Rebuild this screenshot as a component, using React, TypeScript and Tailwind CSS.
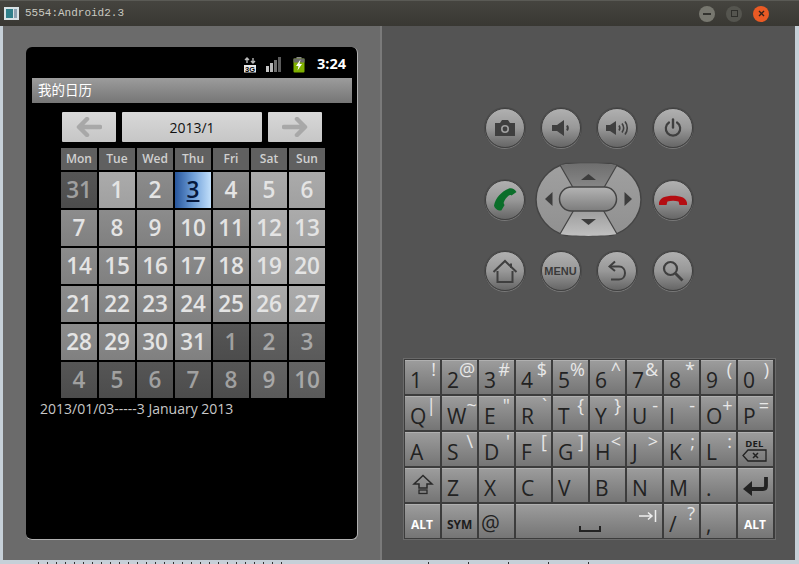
import React from 'react'

const PHONE_FONT = { fontFamily: '"Open Sans", "Noto Sans CJK SC", sans-serif' }

const LIGHT = 'bg-gradient-to-b from-[#ababab] to-[#a0a0a0]'
const MID = 'bg-gradient-to-b from-[#8c8c8c] to-[#808080]'
const FADED = 'bg-gradient-to-b from-[#565656] to-[#4c4c4c]'
const FADED_2 = 'bg-gradient-to-b from-[#646464] to-[#5a5a5a]'

const weekDays = ['Mon', 'Tue', 'Wed', 'Thu', 'Fri', 'Sat', 'Sun']

const days = [
  { n: 31, bg: FADED, text: 'text-[#a0a0a0]' },
  { n: 1, bg: LIGHT },
  { n: 2, bg: MID },
  { n: 3, today: true },
  { n: 4, bg: MID },
  { n: 5, bg: LIGHT },
  { n: 6, bg: LIGHT },
  { n: 7, bg: MID },
  { n: 8, bg: MID },
  { n: 9, bg: MID },
  { n: 10, bg: MID },
  { n: 11, bg: MID },
  { n: 12, bg: LIGHT },
  { n: 13, bg: LIGHT },
  { n: 14, bg: MID },
  { n: 15, bg: MID },
  { n: 16, bg: MID },
  { n: 17, bg: MID },
  { n: 18, bg: MID },
  { n: 19, bg: LIGHT },
  { n: 20, bg: LIGHT },
  { n: 21, bg: MID },
  { n: 22, bg: MID },
  { n: 23, bg: MID },
  { n: 24, bg: MID },
  { n: 25, bg: MID },
  { n: 26, bg: LIGHT },
  { n: 27, bg: LIGHT },
  { n: 28, bg: MID },
  { n: 29, bg: MID },
  { n: 30, bg: MID },
  { n: 31, bg: MID },
  { n: 1, bg: FADED, text: 'text-[#a0a0a0]' },
  { n: 2, bg: FADED_2, text: 'text-[#a8a8a8]' },
  { n: 3, bg: FADED_2, text: 'text-[#a8a8a8]' },
  { n: 4, bg: FADED, text: 'text-[#a0a0a0]' },
  { n: 5, bg: FADED, text: 'text-[#a0a0a0]' },
  { n: 6, bg: FADED, text: 'text-[#a0a0a0]' },
  { n: 7, bg: FADED, text: 'text-[#a0a0a0]' },
  { n: 8, bg: FADED, text: 'text-[#a0a0a0]' },
  { n: 9, bg: FADED_2, text: 'text-[#a8a8a8]' },
  { n: 10, bg: FADED_2, text: 'text-[#a8a8a8]' },
]

const NavArrow = ({ flip }: { flip?: boolean }) => (
  <svg width="26" height="20" viewBox="0 0 26 20" className={flip ? 'scale-x-[-1]' : ''}>
    <path d="M11 2 L3 10 L11 18 M4 10 H24" fill="none" stroke="#a8a8a8" strokeWidth="4.5" strokeLinecap="round" strokeLinejoin="round" />
  </svg>
)

const StatusBar = () => (
  <div className="h-[31px] pt-1 flex items-center justify-end pr-[6px]">
    <svg width="14" height="16" viewBox="0 0 14 16">
      <path d="M4 6V1M2 3l2-2 2 2M10 1v5M8 4l2 2 2-2" fill="none" stroke="#b8b8b8" strokeWidth="1.4" />
      <rect x="1" y="8" width="12" height="7.5" fill="#e8e8e8" />
      <text x="7" y="15" textAnchor="middle" fontSize="7.5" fontWeight="700" fill="#000" fontFamily="Liberation Sans">3G</text>
    </svg>
    <svg width="16" height="15" viewBox="0 0 16 15" className="ml-[9px]">
      <rect x="0" y="9" width="3" height="6" fill="#c4c4c4" />
      <rect x="4" y="6" width="3" height="9" fill="#b8b8b8" />
      <rect x="8" y="3" width="3" height="12" fill="#707070" />
      <rect x="12" y="0" width="3" height="15" fill="#5c5c5c" />
    </svg>
    <svg width="12" height="16" viewBox="0 0 12 16" className="ml-[11px]">
      <rect x="3.5" y="0" width="5" height="2" fill="#8a8a8a" />
      <rect x="0.5" y="1.5" width="11" height="14" rx="1" fill="#7fb000" />
      <rect x="0.5" y="1.5" width="11" height="4" fill="#6a6a6a" />
      <path d="M7.5 2.5 L3 9 H5.5 L4.5 13.5 L9 7 H6.5 Z" fill="#fff" />
    </svg>
    <span className="ml-[12px] text-white text-[14.5px] font-bold leading-none" style={{ fontFamily: '"Open Sans", sans-serif' }}>
      3:24
    </span>
  </div>
)

const Calendar = () => (
  <div className="w-[264px] ml-[29px]">
    <div className="flex gap-1.5 pl-px">
      <button className="w-[54px] h-[30px] flex items-center justify-center rounded-[1px] bg-gradient-to-b from-[#d8d8d8] to-[#c6c6c6]">
        <NavArrow />
      </button>
      <div className="w-[140px] h-[30px] flex items-center justify-center rounded-[1px] bg-gradient-to-b from-[#d8d8d8] to-[#c6c6c6] text-[14px] text-[#111]">
        2013/1
      </div>
      <button className="w-[54px] h-[30px] flex items-center justify-center rounded-[1px] bg-gradient-to-b from-[#d8d8d8] to-[#c6c6c6]">
        <NavArrow flip />
      </button>
    </div>
    <div className="mt-1.5 grid grid-cols-[repeat(7,36px)] gap-0.5 text-[#d0d0d0]">
      {weekDays.map((d) => (
        <div key={d} className="h-[22px] flex items-center justify-center bg-[#606060] text-[12px] font-semibold">
          {d}
        </div>
      ))}
      {days.map((d, i) =>
        d.today ? (
          <div
            key={i}
            className="h-9 flex items-center justify-center bg-gradient-to-r from-[#28569c] via-[#6f9fd8] to-[#c2dffa] text-[22.5px] font-semibold text-[#06183c] underline underline-offset-2"
          >
            {d.n}
          </div>
        ) : (
          <div
            key={i}
            className={`h-9 flex items-center justify-center text-[22.5px] font-semibold ${d.bg} ${d.text ?? 'text-[#e4e4e4]'}`}
          >
            {d.n}
          </div>
        ),
      )}
    </div>
  </div>
)

const Phone = () => (
  <div
    className="w-[332px] h-[493px] rounded-md bg-black border-b border-r border-[#b0b0b0] pl-1.5 pr-[5px] overflow-hidden"
    style={PHONE_FONT}
  >
    <StatusBar />
    <div className="h-[25px] flex items-center pl-1.5 bg-gradient-to-b from-[#9c9c9c] to-[#767676] text-[13.5px] text-white">
      我的日历
    </div>
    <div className="mt-[9px]">
      <Calendar />
    </div>
    <p className="mt-px pl-2 text-[14px] leading-5 text-[#c8c8c8]">2013/01/03-----3 January 2013</p>
  </div>
)

const RoundButton = ({ children }: { children: React.ReactNode }) => (
  <div className="w-10 h-10 rounded-full flex items-center justify-center bg-gradient-to-b from-[#b0b0b0] via-[#989898] to-[#666666] border border-[#404040] shadow-[0_1px_0_#787878,0_0_0_1px_#4a4a4a]">
    {children}
  </div>
)

const ICON = '#3f3f3f'

const Camera = () => (
  <svg width="22" height="18" viewBox="0 0 22 18">
    <path d="M1 4h5l2-3h6l2 3h5v13H1z" fill={ICON} />
    <circle cx="11" cy="10" r="4" fill="#a0a0a0" />
    <circle cx="11" cy="10" r="2.4" fill={ICON} />
  </svg>
)

const VolDown = () => (
  <svg width="20" height="18" viewBox="0 0 20 18">
    <path d="M1 6h5l7-5v16l-7-5H1z" fill={ICON} />
    <path d="M16 6.500c1 1.500 1 3.500 0 5" fill="none" stroke={ICON} strokeWidth="2" />
  </svg>
)

const VolUp = () => (
  <svg width="24" height="18" viewBox="0 0 24 18">
    <path d="M1 6h4l6-4v14l-6-4H1z" fill={ICON} />
    <path d="M14 6.500c1 1.500 1 3.500 0 5M17 4.500c2 2.700 2 6.300 0 9M20 2.500c3 3.800 3 9.200 0 13" fill="none" stroke={ICON} strokeWidth="1.6" />
  </svg>
)

const Power = () => (
  <svg width="18" height="20" viewBox="0 0 18 20">
    <path d="M5 4.500a7.200 7.200 0 1 0 8 0" fill="none" stroke={ICON} strokeWidth="2.200" strokeLinecap="round" />
    <path d="M9 1.500v8" stroke={ICON} strokeWidth="2.400" strokeLinecap="round" />
  </svg>
)

const Call = () => (
  <svg width="26" height="26" viewBox="0 0 26 26">
    <path d="M17 1.500c2.500-1 6 .5 7.500 3.500l-5 3.500c-1-.7-2-.6-3 .2-2.200 2-3.800 4-4.700 6.600-.3 1.100 0 2.100.8 2.700l-3.300 5.500C6 24 2.500 21.500 2 18.500 3.500 11 9.500 4.500 17 1.500z" fill="#0b6e2a" />
  </svg>
)

const HangUp = () => (
  <svg width="30" height="16" viewBox="0 0 30 16">
    <path d="M1 13c-.5-3 1-6 4-7.500C11 3 19 3 25 5.500c3 1.500 4.500 4.500 4 7.500l-7.500 0c-.5-1.500-.5-2.500-1-3.500-3.500-1-7.500-1-11 0-.5 1-.5 2-1 3.500z" fill="#b40d12" />
  </svg>
)

const Home = () => (
  <svg width="26" height="25" viewBox="0 0 26 25">
    <path d="M1.500 13 13 2l11.500 11" fill="none" stroke={ICON} strokeWidth="2" />
    <path d="M19 4.500V9" stroke={ICON} strokeWidth="2" />
    <path d="M5.500 12v11h15V12" fill="none" stroke={ICON} strokeWidth="2" />
  </svg>
)

const Back = () => (
  <svg width="22" height="22" viewBox="0 0 22 22">
    <path d="M9 1.500 3.500 6.500 9 11" fill="none" stroke={ICON} strokeWidth="2" />
    <path d="M4 6.500h9c8 0 8 13 0 13H5" fill="none" stroke={ICON} strokeWidth="2" />
  </svg>
)

const Search = () => (
  <svg width="22" height="22" viewBox="0 0 22 22">
    <circle cx="8.500" cy="8.500" r="6.500" fill="none" stroke={ICON} strokeWidth="2.200" />
    <path d="M13.500 13.500 20.500 20.500" stroke={ICON} strokeWidth="2.800" />
  </svg>
)

const DPad = () => (
  <svg width="107" height="75" viewBox="0 0 107 75">
    <defs>
      <linearGradient id="side" x1="0" y1="0" x2="0" y2="1">
        <stop offset="0" stopColor="#a0a0a0" />
        <stop offset="1" stopColor="#909090" />
      </linearGradient>
      <linearGradient id="up" x1="0" y1="0" x2="0" y2="1">
        <stop offset="0" stopColor="#6e6e6e" />
        <stop offset="1" stopColor="#8c8c8c" />
      </linearGradient>
      <linearGradient id="down" x1="0" y1="0" x2="0" y2="1">
        <stop offset="0" stopColor="#9a9a9a" />
        <stop offset="1" stopColor="#c0c0c0" />
      </linearGradient>
      <linearGradient id="pill" x1="0" y1="0" x2="0" y2="1">
        <stop offset="0" stopColor="#b4b4b4" />
        <stop offset="1" stopColor="#7c7c7c" />
      </linearGradient>
    </defs>
    <path d="M31 1.500h45c17 4 30 19 30 36s-13 32-30 36H31c-17-4-30-19-30-36s13-32 30-36z" fill="url(#side)" stroke="#444" strokeWidth="1.500" />
    <path d="M25 3 L41 30 H66 L82 3 C70 0.500 37 0.500 25 3z" fill="url(#up)" />
    <path d="M25 72 L41 46 H66 L82 72 C70 74.500 37 74.500 25 72z" fill="url(#down)" />
    <path d="M25 3 L40 29M82 3 L67 29M25 72 L40 46M82 72 L67 46" stroke="#444" strokeWidth="1.200" />
    <rect x="24.500" y="25" width="57" height="24" rx="12" fill="url(#pill)" stroke="#444" strokeWidth="1.500" />
    <path d="M53.500 12l7.500 6h-15z" fill="#3d3d3d" />
    <path d="M53.500 63l-7.500-6h15z" fill="#3d3d3d" />
    <path d="M10 37l7.500-7v14z" fill="#3d3d3d" />
    <path d="M97 37l-7.500-7v14z" fill="#3d3d3d" />
  </svg>
)

type KeyDef = {
  main?: React.ReactNode
  alt?: string
  span?: string
  mainClass?: string
}

const keys: KeyDef[] = [
  { main: '1', alt: '!' },
  { main: '2', alt: '@' },
  { main: '3', alt: '#' },
  { main: '4', alt: '$' },
  { main: '5', alt: '%' },
  { main: '6', alt: '^' },
  { main: '7', alt: '&' },
  { main: '8', alt: '*' },
  { main: '9', alt: '(' },
  { main: '0', alt: ')' },
  { main: 'Q', alt: '|' },
  { main: 'W', alt: '~' },
  { main: 'E', alt: '"' },
  { main: 'R', alt: '`' },
  { main: 'T', alt: '{' },
  { main: 'Y', alt: '}' },
  { main: 'U', alt: '-' },
  { main: 'I', alt: '-' },
  { main: 'O', alt: '+' },
  { main: 'P', alt: '=' },
  { main: 'A' },
  { main: 'S', alt: '\\' },
  { main: 'D', alt: "'" },
  { main: 'F', alt: '[' },
  { main: 'G', alt: ']' },
  { main: 'H', alt: '<' },
  { main: 'J', alt: '>' },
  { main: 'K', alt: ';' },
  { main: 'L', alt: ':' },
  {
    main: (
      <span className="flex flex-col items-center leading-none">
        <span className="text-[9.5px] font-bold text-[#1c1c1c] tracking-wide">DEL</span>
        <svg width="25" height="13" viewBox="0 0 25 13" className="mt-px">
          <path d="M6 1h18v11H6L1 6.500z" fill="none" stroke="#222" strokeWidth="1.300" />
          <path d="M11 4l5 5M16 4l-5 5" stroke="#222" strokeWidth="1.500" />
        </svg>
      </span>
    ),
    mainClass: 'pl-1 pb-1',
  },
  {
    main: (
      <svg width="22" height="21" viewBox="0 0 22 21">
        <path d="M11 1.500 2 10h5v4h8v-4h5z" fill="none" stroke="#2a2a2a" strokeWidth="1.500" />
        <rect x="7" y="16" width="8" height="3.500" fill="none" stroke="#2a2a2a" strokeWidth="1.300" />
      </svg>
    ),
    mainClass: 'pl-[7px] pb-[7px]',
  },
  { main: 'Z' },
  { main: 'X' },
  { main: 'C' },
  { main: 'V' },
  { main: 'B' },
  { main: 'N' },
  { main: 'M' },
  { main: '.' },
  {
    main: (
      <svg width="26" height="20" viewBox="0 0 26 20">
        <path d="M24 1v9c0 2-1 3-3 3H8" fill="none" stroke="#222" strokeWidth="3.800" />
        <path d="M10 5 1 13l9 7z" fill="#222" />
      </svg>
    ),
    mainClass: 'pl-1 pb-[6px]',
  },
  { main: <span className="text-[12px] font-bold text-white">ALT</span>, mainClass: 'pl-1.5 pb-1.5' },
  { main: <span className="text-[12px] font-bold text-[#1c1c1c]">SYM</span>, mainClass: 'pl-[5px] pb-1.5' },
  { main: '@', mainClass: 'pl-0.5 pb-1' },
  {
    span: 'col-span-4',
    main: (
      <div className="relative w-full h-full">
        <svg width="22" height="8" viewBox="0 0 22 8" className="absolute bottom-[5px] left-[63px]">
          <path d="M1 1v5h20V1" fill="none" stroke="#222" strokeWidth="2" />
        </svg>
        <svg width="18" height="12" viewBox="0 0 18 12" className="absolute top-[6px] right-[5px]">
          <path d="M0 6h12M9 2.500l4 3.500-4 3.500M16.500 0v12" fill="none" stroke="#eee" strokeWidth="1.500" />
        </svg>
      </div>
    ),
    mainClass: 'w-full h-full pl-0 pb-0',
  },
  { main: '/', alt: '?' },
  { main: ',' },
  { main: <span className="text-[12px] font-bold text-white">ALT</span>, mainClass: 'pl-1.5 pb-1.5' },
]

const Key = ({ k }: { k: KeyDef }) => (
  <div
    className={`h-[34px] flex justify-between bg-gradient-to-b from-[#9d9d9d] to-[#757575] shadow-[inset_0_1px_0_#b0b0b0] ${k.span ?? ''}`}
  >
    <span className={`self-end leading-none text-[21px] text-[#222] ${k.mainClass ?? 'pl-[5px] pb-[3px]'}`}>{k.main}</span>
    {k.alt && <span className="self-start leading-none text-[18px] text-[#e8e8e8] pr-1">{k.alt}</span>}
  </div>
)

const Keyboard = () => (
  <div
    className="w-[373px] grid grid-cols-[repeat(10,35px)] gap-0.5 p-px bg-[#3c3c3c] border border-[#6a6a6a]"
    style={{ fontFamily: '"Open Sans", sans-serif' }}
  >
    {keys.map((k, i) => (
      <Key key={i} k={k} />
    ))}
  </div>
)

const Controls = () => (
  <div className="flex-1 flex flex-col items-center bg-[#545454]">
    <div className="mt-[82px] w-[208px] flex flex-col">
      <div className="flex justify-between">
        <RoundButton><Camera /></RoundButton>
        <RoundButton><VolDown /></RoundButton>
        <RoundButton><VolUp /></RoundButton>
        <RoundButton><Power /></RoundButton>
      </div>
      <div className="mt-[14px] flex items-center justify-between">
        <RoundButton><Call /></RoundButton>
        <DPad />
        <RoundButton><HangUp /></RoundButton>
      </div>
      <div className="mt-[14px] flex justify-between">
        <RoundButton><Home /></RoundButton>
        <RoundButton>
          <span className="text-[11px] font-bold text-[#3a3a3a]" style={{ fontFamily: '"Liberation Sans", sans-serif' }}>
            MENU
          </span>
        </RoundButton>
        <RoundButton><Back /></RoundButton>
        <RoundButton><Search /></RoundButton>
      </div>
    </div>
    <div className="mt-[67px] ml-0.5">
      <Keyboard />
    </div>
  </div>
)

const TitleBar = () => (
  <div className="h-[26px] flex items-center justify-between bg-gradient-to-b from-[#45443f] to-[#393833] pl-[4px] pr-[30px] border-t border-[#5a5a55]">
    <div className="flex items-center gap-[6px]">
      <svg width="15" height="13" viewBox="0 0 15 13">
        <rect width="15" height="13" fill="#d8e2e6" />
        <rect x="2" y="2" width="7" height="9" fill="#2f7f8a" />
        <rect x="10" y="2" width="3" height="9" fill="#8aa0b0" />
      </svg>
      <span className="text-[11px] text-[#c9c9c0]" style={{ fontFamily: '"Liberation Mono", monospace' }}>
        5554:Android2.3
      </span>
    </div>
    <div className="flex items-center gap-[11px]">
      <div className="w-4 h-4 rounded-full bg-[#77776f] flex items-center justify-center">
        <div className="w-[8px] h-[2px] bg-[#33332f]" />
      </div>
      <div className="w-4 h-4 rounded-full bg-[#55554f] flex items-center justify-center">
        <div className="w-[7px] h-[7px] border border-[#2f2f2b]" />
      </div>
      <div className="w-4 h-4 rounded-full bg-[#ea5a24] flex items-center justify-center">
        <svg width="7" height="7" viewBox="0 0 7 7">
          <path d="M1 1l5 5M6 1L1 6" stroke="#33221a" strokeWidth="1.400" />
        </svg>
      </div>
    </div>
  </div>
)

export default function App() {
  return (
    <div className="w-[799px] h-[564px] flex flex-col overflow-hidden bg-[#c6d0d8]">
      <TitleBar />
      <div className="h-[534px] flex ml-[3px] mr-1">
        <div className="w-[377px] pl-[23px] pt-[21px] bg-[#6b6b6b]">
          <Phone />
        </div>
        <div className="w-[2px] bg-[#7a7a7a]" />
        <Controls />
      </div>
      <div className="h-1 flex items-end">
        <div className="ml-[38px] w-[252px] h-[2px] bg-[repeating-linear-gradient(90deg,#333_0,#333_1px,transparent_1px,transparent_9px)]" />
        <div className="ml-[138px] w-[197px] h-[2px] bg-[repeating-linear-gradient(90deg,#333_0,#333_1px,transparent_1px,transparent_40px)]" />
      </div>
    </div>
  )
}
